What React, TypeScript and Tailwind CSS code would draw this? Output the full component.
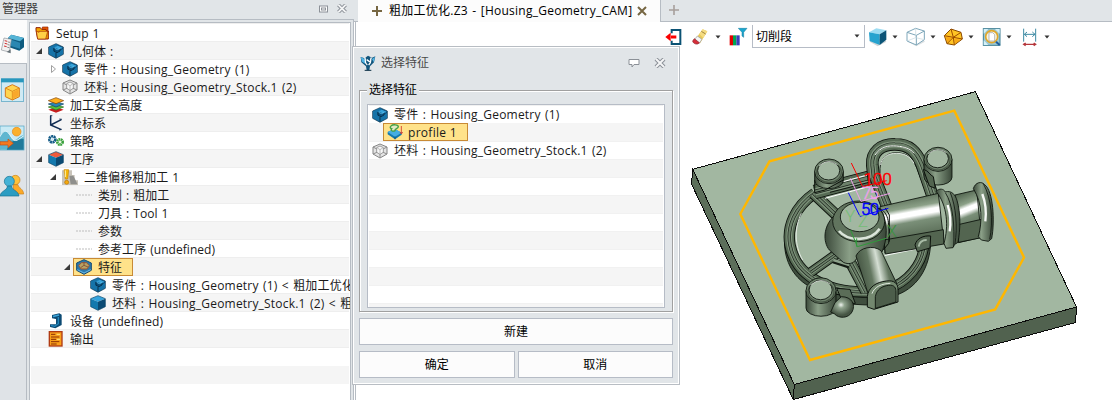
import React from 'react';

const FONT = "font-['Open_Sans','Noto_Sans_CJK_SC',sans-serif]";

interface IconProps {
  children: React.ReactNode;
  size?: string;
  box?: string;
}

const Icon: React.FC<IconProps> = ({ children, size = 'w-4 h-4', box = '0 0 48 48' }) => (
  <svg viewBox={box} className={`${size} shrink-0 overflow-visible`}>
    {children}
  </svg>
);

const PartIcon = () => (
  <Icon>
    <path d="M24 2L46 12V34L24 46L2 34V12Z" fill="#0a4f7c" stroke="#073350" strokeWidth="2" />
    <path d="M3 13L24 3L32 7L16 16V24L26 28L45 18V33L24 44L3 33Z" fill="#1673a8" />
    <path d="M18 13L30 8L44 14L34 20Z" fill="#37a3da" />
    <path d="M18 15V25L27 29L36 24V17M24 30V44" fill="none" stroke="#06304c" strokeWidth="3" />
    <path d="M20 16L28 20L36 16" fill="none" stroke="#5fc0ee" strokeWidth="2.5" />
  </Icon>
);

const StockIcon = () => (
  <Icon>
    <path d="M24 3L45 12V33L24 45L3 33V12Z" fill="#e4e4e4" stroke="#858585" strokeWidth="3" />
    <path d="M3 12L24 23L45 12M24 23V45M3 33L24 24L45 33" fill="none" stroke="#8e8e8e" strokeWidth="3" />
    <path d="M14 14L24 9L34 14V28L24 34L14 28Z" fill="#f8f8f8" stroke="#8e8e8e" strokeWidth="2.5" />
    <path d="M16 15L24 20L32 15M24 20V32" fill="none" stroke="#b0b0b0" strokeWidth="2.5" />
  </Icon>
);

const CubeIcon = ({ top = '#35a4dd' }: { top?: string }) => (
  <Icon>
    <path d="M24 2L46 11L24 20L2 11Z" fill={top} />
    <path d="M2 11L24 20V46L2 35Z" fill="#1479ae" />
    <path d="M46 11L24 20V46L46 35Z" fill="#0b4a73" />
    <path d="M24 2L46 11V35L24 46L2 35V11Z" fill="none" stroke="#0a4467" strokeWidth="2" />
  </Icon>
);

const FolderIcon = () => (
  <Icon>
    <path d="M3 8H16L20 13H34V18H40V42H8L3 16Z" fill="#f7a800" stroke="#8f1d00" strokeWidth="3" />
    <path d="M12 19H38L32 42H8L4 18L12 22Z" fill="#ffd047" stroke="#a22c00" strokeWidth="2" />
    <path d="M22 6H39V20L33 13H22Z" fill="#e85a00" stroke="#8f1d00" strokeWidth="2" />
  </Icon>
);

const LayersIcon = () => (
  <Icon>
    <path d="M1 38L24 31L47 38L24 47Z" fill="#c81e1e" />
    <path d="M1 30L24 23L47 30L24 39Z" fill="#58c03b" stroke="#2b6e1d" strokeWidth="2" />
    <path d="M1 21L24 14L47 21L24 30Z" fill="#2c86b4" stroke="#0c3f60" strokeWidth="2" />
    <path d="M1 11L24 2L47 11L24 20Z" fill="#ffae1a" stroke="#7a3b00" strokeWidth="2" />
  </Icon>
);

const AxisIcon = () => (
  <Icon>
    <path d="M8 2V30L40 44M8 30L40 14" fill="none" stroke="#0f2b52" strokeWidth="4.5" />
    <path d="M6 2H13M34 12L42 13M33 45L41 43" stroke="#0f2b52" strokeWidth="2.5" />
  </Icon>
);

const GearsIcon = () => (
  <Icon>
    <circle cx="13" cy="19" r="9" fill="none" stroke="#125a86" strokeWidth="8" strokeDasharray="6 1.5" />
    <circle cx="13" cy="19" r="3" fill="#bfe2f3" />
    <circle cx="36" cy="27" r="8" fill="none" stroke="#38a03a" strokeWidth="8" strokeDasharray="5 1.5" />
    <circle cx="36" cy="27" r="3" fill="#dff5d5" />
  </Icon>
);

const RoughIcon = () => (
  <Icon>
    <path d="M0 4H30V18H38V34H48V48H0Z" fill="#c9c4ba" />
    <path d="M22 20H34L42 36L46 46H26Z" fill="#8f8f8c" />
    <path d="M6 2H20L17 30H10Z" fill="#f6b90c" stroke="#c98300" strokeWidth="2" />
    <circle cx="14" cy="40" r="6" fill="#f6a90c" stroke="#b87400" strokeWidth="2" />
    <path d="M10 4V24" stroke="#fff3b0" strokeWidth="3" />
  </Icon>
);

const FeatureIcon = () => (
  <Icon>
    <path d="M24 2L46 12V34L24 46L2 34V12Z" fill="#2b79ab" stroke="#174a70" strokeWidth="3" />
    <path d="M8 20L16 11H32L40 20L33 30H15Z" fill="#b9a263" stroke="#9c5531" strokeWidth="3" />
    <path d="M14 26L24 19L36 24M24 19V11" fill="none" stroke="#7e4a35" strokeWidth="2.5" />
    <path d="M4 32L24 42L44 32" fill="none" stroke="#69b9e8" strokeWidth="3" />
  </Icon>
);

const DeviceIcon = () => (
  <Icon>
    <path d="M12 6L34 1L41 5V36L22 46L6 42V34L24 34V18L12 16Z" fill="#0c4a73" />
    <path d="M14 8L32 4L34 8L16 13Z" fill="#3aa5db" />
    <path d="M31 12V32L20 40L9 37" fill="none" stroke="#2388bd" strokeWidth="4" />
  </Icon>
);

const OutputIcon = () => (
  <Icon>
    <rect x="4" y="2" width="38" height="43" fill="#f9a01b" stroke="#b03a12" strokeWidth="4" />
    <path d="M9 10H22M9 18H34M9 25H24M9 32H34M9 39H26" stroke="#8d2f05" strokeWidth="3" />
    <path d="M26 10H36M27 25H36" stroke="#ffe680" strokeWidth="3" />
  </Icon>
);

const ProfileIcon = () => (
  <Icon>
    <path d="M2 24L22 14L44 26V32L24 46L2 31Z" fill="#1479ae" />
    <path d="M2 24L22 14L44 26L24 38Z" fill="#45ade2" />
    <path d="M24 38V46" stroke="#0a4467" strokeWidth="2" />
    <path d="M12 6C18 0 34 2 34 8C34 14 22 14 24 20C16 24 10 18 14 14C8 12 9 8 12 6Z" fill="#e0e9c2" stroke="#44a046" strokeWidth="4" />
    <path d="M43 6V28M39 24L43 30L47 24" fill="none" stroke="#d3312c" strokeWidth="2.5" />
  </Icon>
);

const DashIcon = () => (
  <Icon>
    <path d="M0 24H48" stroke="#bdbdbd" strokeWidth="3" strokeDasharray="6 3" />
  </Icon>
);

interface Row {
  pad: string;
  lead?: 'open' | 'closed' | 'none';
  icon: React.ReactNode;
  label: string;
  selected?: boolean;
}

const treeRows: Row[] = [
  { pad: 'pl-1', icon: <FolderIcon />, label: 'Setup 1' },
  { pad: 'pl-[5px]', lead: 'open', icon: <PartIcon />, label: '几何体 :' },
  { pad: 'pl-[19px]', lead: 'closed', icon: <PartIcon />, label: '零件 : Housing_Geometry (1)' },
  { pad: 'pl-[19px]', lead: 'none', icon: <StockIcon />, label: '坯料 : Housing_Geometry_Stock.1 (2)' },
  { pad: 'pl-[5px]', lead: 'none', icon: <LayersIcon />, label: '加工安全高度' },
  { pad: 'pl-[5px]', lead: 'none', icon: <AxisIcon />, label: '坐标系' },
  { pad: 'pl-[5px]', lead: 'none', icon: <GearsIcon />, label: '策略' },
  { pad: 'pl-[5px]', lead: 'open', icon: <CubeIcon top="#f05a3c" />, label: '工序' },
  { pad: 'pl-[19px]', lead: 'open', icon: <RoughIcon />, label: '二维偏移粗加工 1' },
  { pad: 'pl-[33px]', lead: 'none', icon: <DashIcon />, label: '类别 : 粗加工' },
  { pad: 'pl-[33px]', lead: 'none', icon: <DashIcon />, label: '刀具 : Tool 1' },
  { pad: 'pl-[33px]', lead: 'none', icon: <DashIcon />, label: '参数' },
  { pad: 'pl-[33px]', lead: 'none', icon: <DashIcon />, label: '参考工序 (undefined)' },
  { pad: 'pl-[33px]', lead: 'open', icon: <FeatureIcon />, label: '特征', selected: true },
  { pad: 'pl-[47px]', lead: 'none', icon: <PartIcon />, label: '零件 : Housing_Geometry (1) < 粗加工优化' },
  { pad: 'pl-[47px]', lead: 'none', icon: <CubeIcon />, label: '坯料 : Housing_Geometry_Stock.1 (2) < 粗' },
  { pad: 'pl-[5px]', lead: 'none', icon: <DeviceIcon />, label: '设备 (undefined)' },
  { pad: 'pl-[5px]', lead: 'none', icon: <OutputIcon />, label: '输出' },
];

const Label = ({ text }: { text: string }) => (
  <span
    className={`whitespace-nowrap leading-[18px] ${
      text.includes('Housing') ? 'tracking-[0.2px] [word-spacing:1px]' : 'tracking-[0.05px] [word-spacing:0.8px]'
    }`}
  >
    {text}
  </span>
);

const Lead = ({ kind }: { kind: 'open' | 'closed' | 'none' }) => (
  <span className="w-3 h-4 shrink-0">
    {kind !== 'none' && (
      <svg viewBox="0 0 12 16" className="w-3 h-4">
        {kind === 'open' ? (
          <path d="M6 5V11H0Z" fill="#3a3a3a" />
        ) : (
          <path d="M1.5 4.5L5.5 8L1.5 11.5Z" fill="#fff" stroke="#a0a0a0" />
        )}
      </svg>
    )}
  </span>
);

const TreeRow = ({ row, odd }: { row: Row; odd: boolean }) => (
  <div className={`flex h-[18px] items-center border-t border-[#eeeeee] pt-px ${row.pad} ${odd ? 'bg-[#f5f5f5]' : 'bg-white'}`}>
    {row.lead && <Lead kind={row.lead} />}
    <div
      className={
        row.selected
          ? 'relative -ml-[3px] flex h-[18px] w-[60px] items-center gap-1.5 border border-[#c88a35] bg-[#ffe28a] pl-0.5'
          : `flex items-center ${row.lead ? 'gap-1.5' : 'gap-[5px]'}`
      }
    >
      {row.icon}
      <span className="flex translate-y-px">
        <Label text={row.label} />
      </span>
    </div>
  </div>
);

const Close = ({ className }: { className: string }) => (
  <svg viewBox="0 0 12 10" className={className}>
    <path d="M2 1L10 9M10 1L2 9" stroke="#8b9097" strokeWidth="4" />
    <path d="M2 1L10 9M10 1L2 9" stroke="#f4f5f6" strokeWidth="2" />
  </svg>
);

const Sidebar = () => (
  <div className="flex w-[27px] shrink-0 flex-col">
    <div className="flex h-[43px] items-center bg-[#fcfcfc]">
      <Icon size="w-6 h-6" box="0 0 72 72">
        <path d="M24 24L34 14L72 24V52L58 62L24 50Z" fill="#0f5c80" />
        <path d="M24 24L34 14L72 24L60 34Z" fill="#55b4d6" />
        <path d="M30 28L60 38V56L30 47Z" fill="#2a87b1" />
        <path d="M12 24L34 28L28 66L4 60Z" fill="#f2f2f2" stroke="#8c9298" strokeWidth="2" />
        <path d="M14 32L22 34M14 40L22 42M12 48L20 50" stroke="#cf3030" strokeWidth="3" />
        <path d="M24 36L30 37M23 44L29 45M22 52L28 53" stroke="#555" strokeWidth="2" />
        <path d="M20 66L32 58V70Z" fill="#677177" />
      </Icon>
    </div>
    <div className="flex grow flex-col border-r border-t border-[#b6bcc3] bg-[#dfe3e7]">
      <Icon size="mt-[14px] w-6 h-6" box="0 0 72 72">
        <rect x="4" y="2" width="67" height="68" fill="#cfeaf4" stroke="#4aa0c0" strokeWidth="2" />
        <rect x="3" y="2" width="68" height="11" fill="#2897bd" />
        <path d="M37 20L58 30V56L37 66L16 56V30Z" fill="#ffd550" stroke="#d77a18" strokeWidth="3" />
        <path d="M16 30L37 40L58 30M37 40V66" fill="none" stroke="#e08c1d" strokeWidth="3" />
        <path d="M38 42L56 33V54L38 63Z" fill="#f9a82b" />
      </Icon>
      <Icon size="mt-6 w-6 h-6" box="0 0 72 72">
        <rect x="0" y="0" width="72" height="72" fill="#c9eaf5" stroke="#4aa0c0" strokeWidth="2" />
        <path d="M0 30C12 8 22 12 34 34C46 56 52 30 71 28V71H0Z" fill="#5fb6d0" />
        <path d="M30 50C44 42 54 40 71 38V71H20Z" fill="#217a9b" />
        <path d="M0 32C12 8 22 12 34 34C46 54 56 38 71 30" fill="none" stroke="#f3fbfd" strokeWidth="3" />
        <circle cx="50" cy="17" r="13" fill="#fbb02d" stroke="#e88818" strokeWidth="2" />
        <path d="M0 47H24V39L40 52L24 65V57H0Z" fill="#f47a20" stroke="#c94d10" strokeWidth="2" />
      </Icon>
      <Icon size="mt-6 w-6 h-6" box="0 0 72 72">
        <circle cx="46" cy="18" r="14" fill="#ffc13a" stroke="#c77f18" strokeWidth="2" />
        <path d="M40 32H54C55 42 70 44 71 60H40Z" fill="#fba928" stroke="#c77f18" strokeWidth="2" />
        <circle cx="28" cy="22" r="15" fill="#44b2d6" stroke="#17708f" strokeWidth="2" />
        <path d="M22 36H35C36 50 54 48 57 66H0C2 50 22 50 22 36Z" fill="#2b9cc2" stroke="#17708f" strokeWidth="2" />
      </Icon>
    </div>
  </div>
);

const Manager = () => (
  <div className="flex h-[400px] w-[354px] shrink-0 flex-col bg-[#e1e5e8]">
    <div className="flex h-[20px] items-start justify-between border-b border-[#b6bcc3]">
      <span className="pl-[2px] leading-[17px] text-[#3c3c3c]">管理器</span>
      <div className="mr-1.5 mt-1 flex items-center gap-2">
        <svg viewBox="0 0 9 8" className="h-2 w-[9px]">
          <rect x=".5" y="1" width="8" height="6" fill="#fff" stroke="#8b9097" />
          <rect x="2.5" y="3" width="4" height="2" fill="none" stroke="#8b9097" />
        </svg>
        <Close className="h-[9px] w-3" />
      </div>
    </div>
    <div className="flex min-h-0 grow border-r border-[#b6bcc3]">
      <Sidebar />
      <div className="ml-0.5 mr-[2px] mt-0.5 grow overflow-hidden border border-b-0 border-[#b6bcc3] bg-white px-px">
        {treeRows.map((row, i) => (
          <TreeRow key={row.label} row={row} odd={i % 2 === 1} />
        ))}
        <div className="h-[19px] border-t border-[#eeeeee]" />
        <div className="h-[18px] bg-[#f5f5f5]" />
      </div>
    </div>
  </div>
);

const DialogRow = ({ icon, label = '', odd }: { icon?: React.ReactNode; label?: string; odd: boolean }) => (
  <div className={`flex h-[18px] items-center gap-1.5 border-t border-[#f1f1f1] pl-[3px] ${odd ? 'bg-[#f5f5f5]' : 'bg-white'}`}>
    {icon}
    <Label text={label} />
  </div>
);

const Button = ({ children }: { children: React.ReactNode }) => (
  <button className="flex h-[27px] flex-1 items-center justify-center border border-[#b6bcc6] bg-[#fcfcfc] text-black">{children}</button>
);

const Dialog = () => (
  <div className="absolute left-[352px] top-[46px] flex h-[339px] w-[328px] flex-col border border-[#b8bdc3] bg-[#e1e5e8] shadow-[inset_1px_1px_0_#fff,inset_-1px_-1px_0_#fff]">
    <div className="flex h-[32px] items-center px-[7px]">
      <Icon size="w-4 h-4">
        <path d="M2 6L14 10L24 2L36 8L46 4L42 22L30 34L28 46H20L18 34L4 22Z" fill="#12557c" />
        <path d="M2 6L14 12L16 26L6 20ZM36 12L45 6L41 22Z" fill="#52b5e5" />
        <path d="M14 8C20 16 10 22 22 30M34 8C28 18 38 18 26 30M20 14L32 22" fill="none" stroke="#fff" strokeWidth="4" />
        <path d="M14 46H34" stroke="#0b2e44" strokeWidth="3" />
      </Icon>
      <span className="ml-[5px] grow text-[#4a4a4a]">选择特征</span>
      <svg viewBox="0 0 12 10" className="mr-[14px] h-[10px] w-3">
        <path d="M1 1.5H11V6.5H6L4 9V6.5H1Z" fill="#fff" stroke="#8b9097" />
      </svg>
      <Close className="mr-[6px] h-2.5 w-3" />
    </div>
    <fieldset className="mx-1.5 mt-0 flex h-[233px] flex-col border border-[#a0a0a0] px-[7px] pb-1 shadow-[1px_1px_0_#fff,inset_1px_1px_0_#fff]">
      <legend className="bg-[#e1e5e8] px-0.5 leading-[22px] text-black">选择特征</legend>
      <div className="mt-[3px] h-[204px] overflow-hidden border border-[#b6bcc6] bg-white px-px">
        <DialogRow odd={false} icon={<PartIcon />} label="零件 : Housing_Geometry (1)" />
        <div className="flex h-[18px] bg-[#f5f5f5] pl-[14px]">
          <div className="flex h-[18px] w-[85px] items-center gap-[5px] border border-[#c88a35] bg-[#ffe28a] pl-[3px]">
            <ProfileIcon />
            <span className="translate-y-px whitespace-nowrap tracking-[0.3px]">profile 1</span>
          </div>
        </div>
        <DialogRow odd={false} icon={<StockIcon />} label="坯料 : Housing_Geometry_Stock.1 (2)" />
        {[3, 4, 5, 6, 7, 8, 9, 10, 11].map((n) => (
          <DialogRow key={n} odd={n % 2 === 1} />
        ))}
      </div>
    </fieldset>
    <div className="mx-1.5 mt-[6px] flex">
      <Button>新建</Button>
    </div>
    <div className="mx-1.5 mt-1.5 flex gap-[3px]">
      <Button>确定</Button>
      <Button>取消</Button>
    </div>
  </div>
);

const Tabs = () => (
  <div className="flex h-[22px]">
    <div className="-ml-px flex w-[302px] items-start bg-[#fcfcfc] pl-[14px] text-black">
      <svg viewBox="0 0 10 10" className="mt-1.5 h-2.5 w-2.5">
        <path d="M5 0V10M0 5H10" stroke="#766642" strokeWidth="2" />
      </svg>
      <span className="ml-[7px] w-[243px] whitespace-nowrap leading-[21px] tracking-[0.25px] [word-spacing:1px]">
        粗加工优化.Z3 - [Housing_Geometry_CAM]
      </span>
      <svg viewBox="0 0 10 10" className="ml-[5px] mt-1.5 h-2.5 w-2.5">
        <path d="M1 1L9 9M9 1L1 9" stroke="#766642" strokeWidth="2" />
      </svg>
    </div>
    <div className="flex grow items-start border-b border-l border-[#b6bcc3] bg-[#e1e5e8] pl-2">
      <svg viewBox="0 0 10 10" className="mt-[5px] h-2.5 w-2.5">
        <path d="M5 0V10M0 5H10" stroke="#a79f9b" strokeWidth="1.6" />
      </svg>
    </div>
  </div>
);

const Caret = ({ className = '' }: { className?: string }) => (
  <svg viewBox="0 0 6 4" className={`h-1 w-1.5 shrink-0 ${className}`}>
    <path d="M.5 .5H5.5L3 3.5Z" fill="#333" />
  </svg>
);

const Toolbar = () => (
  <div className="ml-[306px] mt-[3px] flex h-[23px] items-center">
    <Icon size="w-[18px] h-[18px]" box="0 0 54 54">
      <path d="M20 16V6H46V48H20V38" fill="none" stroke="#0b5274" strokeWidth="6" />
      <path d="M34 27H18" stroke="#fa0000" strokeWidth="9" />
      <path d="M1 27L17 14V40Z" fill="#fa0000" />
    </Icon>
    <Icon size="ml-[9px] w-[18px] h-[18px]" box="0 0 54 54">
      <path d="M10 34L32 4L46 10L24 46Z" fill="#e8c95a" />
      <path d="M22 18L32 4L46 10L34 30Z" fill="#f5dc82" />
      <path d="M28 10L41 18" stroke="#a08540" strokeWidth="3" />
      <path d="M16 24L30 34L22 46L8 34Z" fill="#f5f5f5" stroke="#999" strokeWidth="2" />
      <path d="M7 32L22 44C16 53 2 46 2 39Z" fill="#d62e3a" stroke="#8a1c25" strokeWidth="2" />
    </Icon>
    <Caret className="ml-[5px]" />
    <Icon size="ml-2 w-[18px] h-[18px]" box="0 0 54 54">
      <rect x="2" y="22" width="10" height="30" fill="#e00000" />
      <rect x="12" y="22" width="10" height="30" fill="#00a651" />
      <rect x="22" y="22" width="10" height="30" fill="#3a3fb8" />
      <path d="M28 1H54L44 13V28L39 24V13Z" fill="#19a6cf" stroke="#0e7799" strokeWidth="1.5" />
    </Icon>
    <div className="ml-[5px] flex h-[23px] w-[113px] items-center justify-between border border-t-0 border-[#b6bcc6] bg-white pl-[3px] pr-1 text-black">
      <span className="translate-y-px">切削段</span>
      <Caret />
    </div>
    <Icon size="ml-0.5 w-5 h-5" box="0 0 60 60">
      <path d="M8 44L32 58L58 44L52 36H10Z" fill="#cfd5d8" />
      <path d="M6 16L28 4L58 10L38 22Z" fill="#9ddcf2" />
      <path d="M6 16L38 22V54L8 42Z" fill="#27a3cf" />
      <path d="M38 22L58 10V38L38 54Z" fill="#0b5578" />
    </Icon>
    <Caret className="ml-[5px]" />
    <Icon size="ml-[7px] w-5 h-5" box="0 0 60 60">
      <path d="M8 44L34 58L60 44L52 36H10Z" fill="#dde1e3" />
      <path d="M6 16L32 4L58 12V38L34 54L6 42Z" fill="#fff" stroke="#7ea7ba" strokeWidth="3" />
      <path d="M6 16L34 25L58 12M34 25V54" fill="none" stroke="#7ea7ba" strokeWidth="3" />
      <path d="M32 4V32L6 42M32 32L58 38" fill="none" stroke="#c6d8e0" strokeWidth="2" />
    </Icon>
    <Caret className="ml-[5px]" />
    <Icon size="ml-[7px] w-5 h-5" box="0 0 60 60">
      <path d="M4 26L24 6L54 16L58 36L34 54L12 50Z" fill="#ffc425" stroke="#8b4a00" strokeWidth="3" />
      <path d="M24 6L31 31L4 26M31 31L54 16M31 31L58 36M31 31L34 54M31 31L12 50" fill="none" stroke="#9d4b00" strokeWidth="3" />
      <path d="M8 29L27 33L13 46ZM35 35L53 38L37 50Z" fill="#f8a010" opacity=".8" />
    </Icon>
    <Caret className="ml-[5px]" />
    <Icon size="ml-[7px] w-5 h-5" box="0 0 60 60">
      <rect x="7" y="5" width="50" height="50" fill="#9cc9d6" stroke="#3e7f94" strokeWidth="3" />
      <path d="M8 6H22L8 20ZM42 6H56V20ZM8 40V54H22Z" fill="#d6f1f8" />
      <circle cx="32" cy="29" r="18" fill="#f8f4df" stroke="#e0a72b" strokeWidth="5" />
      <path d="M24 17H35L41 23V42H24Z" fill="#fff" stroke="#999" strokeWidth="2" />
      <path d="M45 44L56 54" stroke="#1f5c9c" strokeWidth="6" />
    </Icon>
    <Caret className="ml-[5px]" />
    <Icon size="ml-[7px] w-5 h-5" box="0 0 60 60">
      <path d="M14 5V44M50 5V44M16 22H48M24 15L16 22L24 29M40 15L48 22L40 29" fill="none" stroke="#3c8aa3" strokeWidth="3" />
      <path d="M14 52H50M20 48L14 52L20 56M44 48L50 52L44 56" fill="none" stroke="#b4353a" strokeWidth="4" />
    </Icon>
    <Caret className="ml-[5px]" />
  </div>
);

// Round tube built from stacked strokes: outline, body, highlight, inner seam
const Tube = ({ d, w }: { d: string; w: number }) => (
  <g fill="none" strokeLinejoin="round">
    <path d={d} stroke="#0a0f0a" strokeWidth={w} />
    <path d={d} stroke="#566a54" strokeWidth={w - 5} />
    <path d={d} stroke="#82977f" strokeWidth={w * 0.5} />
    <path d={d} stroke="#1b231b" strokeWidth={w * 0.3} />
    <path d={d} stroke="#6c816a" strokeWidth={w * 0.3 - 4} />
  </g>
);

interface BossProps {
  cx: number;
  cy: number;
  r: number;
  h: number;
}

const Boss = ({ cx, cy, r, h }: BossProps) => (
  <g stroke="#0c120c" strokeWidth="2.6">
    <path d={`M${cx - r} ${cy}V${cy + h}A${r} ${r * 0.55} 0 0 0 ${cx + r} ${cy + h}V${cy}Z`} fill="url(#boss)" />
    <ellipse cx={cx} cy={cy} rx={r} ry={r * 0.86} fill="#6f846d" />
    <ellipse cx={cx} cy={cy + 3} rx={r - 6} ry={r * 0.7} fill="none" stroke="#485746" strokeWidth="4" />
    <ellipse cx={cx - 1} cy={cy - 2} rx={r * 0.77} ry={r * 0.65} fill="#a2b7a1" />
    <path d={`M${cx - r * 0.7} ${cy - 17}Q${cx} ${cy - r * 0.95} ${cx + r * 0.6} ${cy - 20}`} fill="none" stroke="#f4f8f4" strokeWidth="2" />
  </g>
);

const Model = () => (
  <svg viewBox="680 60 432 340" className="absolute right-0 top-[60px] h-[340px] w-[432px]">
    <defs>
      <linearGradient id="boss">
        <stop offset="0" stopColor="#3c4a3b" />
        <stop offset=".4" stopColor="#8a9f87" />
        <stop offset="1" stopColor="#3a4839" />
      </linearGradient>
      <linearGradient id="pipe" x1=".4" y1="0" x2=".6" y2="1">
        <stop offset="0" stopColor="#4c5f4a" />
        <stop offset=".25" stopColor="#8ba087" />
        <stop offset=".33" stopColor="#ffffff" />
        <stop offset=".4" stopColor="#ffffff" />
        <stop offset=".5" stopColor="#7a8f78" />
        <stop offset=".75" stopColor="#5d705a" />
        <stop offset="1" stopColor="#4a5948" />
      </linearGradient>
      <linearGradient id="arm" x1="0" y1=".55" x2="1" y2=".3">
        <stop offset="0" stopColor="#3d4c3b" />
        <stop offset=".35" stopColor="#647861" />
        <stop offset=".55" stopColor="#d5dfd4" />
        <stop offset=".75" stopColor="#647861" />
        <stop offset="1" stopColor="#3f4d3d" />
      </linearGradient>
      <radialGradient id="ball" cx=".45" cy=".4">
        <stop offset="0" stopColor="#f0f4f0" />
        <stop offset=".3" stopColor="#91a58f" />
        <stop offset="1" stopColor="#455443" />
      </radialGradient>
    </defs>
    <g stroke="#0a0a0a" strokeWidth="1" shapeRendering="crispEdges">
      <path d="M692.7 169.3L975.3 91.7L1076.5 307L794.3 384.5Z" fill="#a2b7a1" />
      <path d="M692.7 169.3L691.5 184L793.3 399.5L794.3 384.5Z" fill="#5c6f5a" />
      <path d="M794.3 384.5L1076.5 307L1075.5 322.5L793.3 399.5Z" fill="#51624f" />
    </g>
    <path d="M740.3 214L769.5 161.3L954.3 110.7L1024 257.5L995.2 309.4L810 360Z" fill="none" stroke="#ffb700" strokeWidth="2.4" />

    <g transform="translate(780 130) scale(.33333)">
      {/* outer wall and rim */}
      <path d="M14 320C8 400 50 450 90 470L170 520L260 525L350 495C420 470 455 400 452 320L420 350L340 460L160 470L60 410Z" fill="#3f4e3e" stroke="#0c120c" strokeWidth="2.6" />
      <path d="M100 190L275 130L330 220L430 320C420 400 380 440 340 462C280 495 160 480 100 440C60 410 30 370 32 320C35 260 65 220 100 190Z" fill="#a2b7a1" stroke="#0c120c" strokeWidth="2.6" />
      <Tube d="M104 190C45 230 20 290 30 345C40 395 65 425 108 452C160 484 220 486 272 486" w={34} />
      <Tube d="M434 325C435 385 400 440 345 468" w={30} />
      <path d="M64 250C44 290 42 345 68 390" fill="none" stroke="#eef3ee" strokeWidth="2.5" />

      {/* spokes */}
      <Tube d="M100 190L170 256" w={34} />
      <Tube d="M92 427L175 368" w={30} />
      <Tube d="M310 352L428 326" w={36} />
      <path d="M314 376L412 356" stroke="#f5f8f5" strokeWidth="4" />
      <Tube d="M205 385L258 485" w={34} />
      <path d="M160 392L208 408" stroke="#141b14" strokeWidth="16" />
      <path d="M160 390L208 405" stroke="#8ba089" strokeWidth="8" />

      {/* upper rib and loop */}
      <Tube d="M104 186L285 139" w={44} />
      <path d="M135 205L262 171M130 171L270 133" stroke="#fff" strokeWidth="3" />
      <path d="M150 187L275 155" stroke="#0e140e" strokeWidth="3" />
      <path d="M300 115C302 82 324 68 348 68C384 68 400 86 411 116L446 208L330 226L300 150Z" fill="#a2b7a1" stroke="#0c120c" strokeWidth="2.6" />
      <Tube d="M282 150L277 105C274 66 303 42 345 43C388 43 409 64 426 105L460 205" w={38} />
      <Tube d="M284 140L320 230" w={34} />
      <path d="M285 75C302 50 325 46 350 48C374 50 392 57 402 70" fill="none" stroke="#f6faf6" strokeWidth="3" />
      <path d="M302 105C304 82 325 69 350 70C380 70 394 85 402 100" fill="none" stroke="#eff4ef" strokeWidth="2.5" />

      <Boss cx={147} cy={124} r={43} h={28} />
      <path d="M104 150V188L135 180L190 150" fill="none" stroke="#0c120c" strokeWidth="3" />
      <Boss cx={474} cy={88} r={42} h={54} />
      <path d="M430 118C446 122 450 136 460 140L466 175L448 168Z" fill="#52644f" stroke="#0c120c" strokeWidth="3" />

      {/* horizontal pipe with flanges */}
      <path d="M300 230L475 190L492 340L315 362Z" fill="url(#pipe)" stroke="#0c120c" strokeWidth="2.6" />
      <path d="M312 330L490 299L492 342L316 372Z" fill="#536550" stroke="#0c120c" strokeWidth="2.6" />
      <path d="M525 195L590 180L604 322L535 338Z" fill="url(#pipe)" stroke="#0c120c" strokeWidth="2.6" />
      <path d="M530 285L604 268L604 323L536 337Z" fill="#536550" stroke="#0c120c" strokeWidth="2.6" />
      <path d="M468 184C478 174 491 176 496 186C514 180 526 194 531 211C543 250 541 300 534 337L523 344L519 353L498 355L492 340C506 290 503 226 468 184Z" fill="url(#boss)" stroke="#0c120c" strokeWidth="2.6" />
      <path d="M496 188C520 224 524 290 521 350M511 188C528 230 533 290 525 342" fill="none" stroke="#101710" strokeWidth="2.6" />
      <path d="M503 225C514 260 513 280 509 304" fill="none" stroke="#fff" strokeWidth="7" />
      <path d="M580 176C586 156 605 153 614 164C640 183 645 275 635 326L625 334L604 330L595 320C607 275 608 220 580 176Z" fill="url(#boss)" stroke="#0c120c" strokeWidth="2.6" />
      <path d="M610 161C635 205 640 274 629 328" fill="none" stroke="#101710" strokeWidth="2.6" />
      <path d="M607 192C619 224 619 250 616 274" fill="none" stroke="#f5f8f5" strokeWidth="7" />
      <path d="M405 345C410 325 430 316 452 318L450 354L412 365Z" fill="#566854" stroke="#0c120c" strokeWidth="3" />
      <path d="M416 350C418 335 430 330 440 330" fill="none" stroke="#a9bca7" strokeWidth="6" />

      {/* hub */}
      <path d="M160 260C130 290 128 335 148 360L190 397C205 404 220 402 230 386L306 366C322 330 326 275 300 235Z" fill="url(#boss)" stroke="#0c120c" strokeWidth="2.6" />
      <ellipse cx="236" cy="274" rx="78" ry="61" fill="#61745e" stroke="#0c120c" strokeWidth="2.6" />
      <path d="M177 303C205 336 272 335 299 296" fill="none" stroke="#dce5db" strokeWidth="8" />
      <ellipse cx="239" cy="261" rx="58" ry="44" fill="#a2b7a1" stroke="#0c120c" strokeWidth="2.6" />
      <path d="M304 238C320 250 331 265 326 340L310 360M316 234L328 255V335" fill="none" stroke="#0c120c" strokeWidth="3" />

      {/* lower arm */}
      <path d="M228 378C238 352 280 344 303 362L350 460L266 496Z" fill="url(#arm)" stroke="#0c120c" strokeWidth="2.6" />
      <path d="M262 500C265 472 288 456 320 453C342 450 355 460 354 480V516L282 538L262 531Z" fill="#73886f" stroke="#0c120c" strokeWidth="3" />
      <path d="M286 535V500C290 478 306 468 326 466C344 464 348 474 348 486V516Z" fill="#4d5e4b" stroke="#0c120c" strokeWidth="2.6" />
      <path d="M276 491C283 470 305 461 331 460" fill="none" stroke="#dfe8de" strokeWidth="3" />

      <path d="M170 475L210 478L226 520L190 520Z" fill="#5b6d58" stroke="#0c120c" strokeWidth="3" />
      <Boss cx={123} cy={482} r={45} h={52} />
      <path d="M165 518L184 500C216 500 228 524 216 546C205 566 176 566 164 552L152 546Z" fill="url(#ball)" stroke="#0c120c" strokeWidth="2.6" />

      {/* axis labels */}
      <g fill="none" strokeWidth="3">
        <path d="M232 350L318 325M232 350L212 300M230 350V325" stroke="#2f9a3a" />
        <path d="M214 99L248 170L320 152" stroke="#f00" />
        <path d="M211 145L243 214L330 190" stroke="#f0a0ee" />
        <path d="M205 188L240 259L325 235" stroke="#00f" />
      </g>
      <g fontSize="50" className="font-['Roboto'] font-light">
        <text x="196" y="276" fill="#74bd76">Y</text>
        <text x="234" y="291" fill="#74bd76">Z</text>
        <text x="320" y="322" fill="#3c913f">X</text>
        <text x="246" y="207" fill="#f0a0ee" stroke="#f0a0ee" strokeWidth="1.2" textLength="50">75</text>
        <text x="251" y="166" fill="#f00" stroke="#f00" strokeWidth="1.8" textLength="84">100</text>
        <text x="243" y="256" fill="#00f" stroke="#00f" strokeWidth="1.8" textLength="54">50</text>
      </g>
    </g>
  </svg>
);

const App: React.FC = () => (
  <div lang="zh-CN" className={`relative flex h-[400px] w-[1112px] overflow-hidden bg-white text-[12px] leading-[18px] text-[#1a1a1a] ${FONT}`}>
    <Manager />
    <div className="w-[5px] shrink-0">
      <div className="h-[22px] border-b border-r border-[#b6bcc3] bg-[#e1e5e8]" />
      <div className="h-[378px] w-0.5 border-r border-[#b6bcc3]" />
    </div>
    <div className="min-w-0 grow">
      <Tabs />
      <Toolbar />
    </div>
    <Model />
    <Dialog />
  </div>
);

export default App;
